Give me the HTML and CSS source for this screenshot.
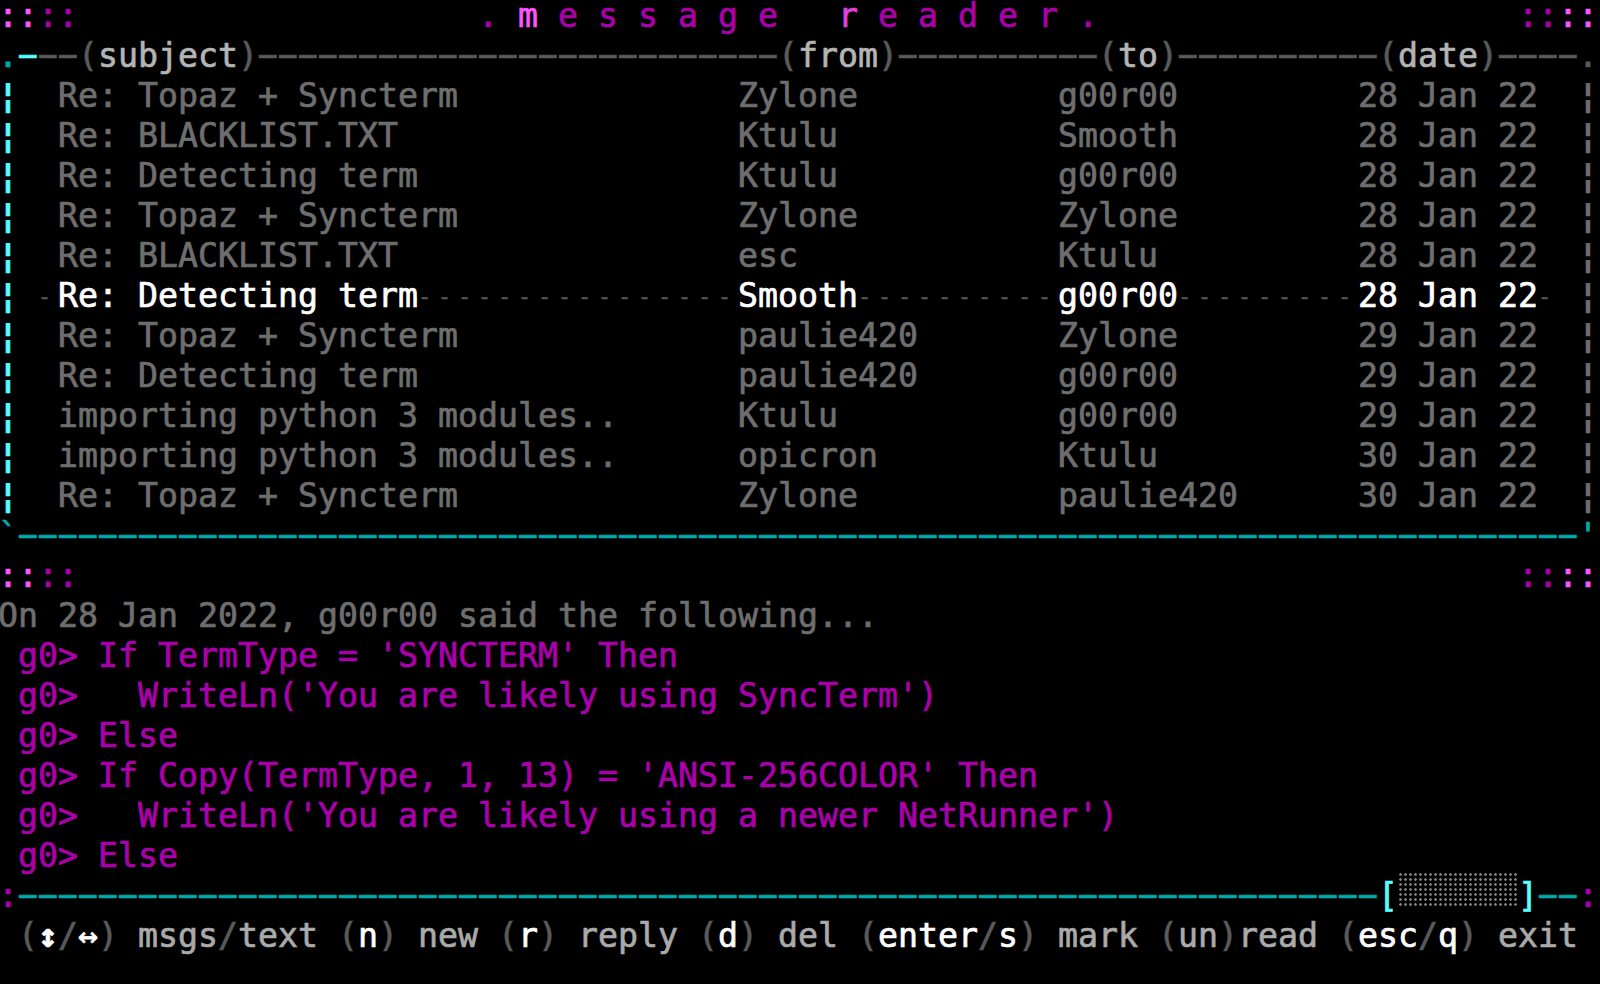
FILE: index.html
```html
<!DOCTYPE html>
<html lang="en">
<head>
  <meta charset="UTF-8">
  <title>message reader</title>
  <link rel="stylesheet" href="styles.css">
</head>
<body>
  <div class="screen">
    <!-- title -->
    <div class="row"><span class="pk">::</span><span class="mg">::</span>                    <span class="mg">.</span> <span class="pk">m</span><span class="mg"> e s s a g e   </span><span class="pk2">r</span><span class="mg"> e a d e r .</span>                     <span class="mg">::</span><span class="pk">::</span></div>

    <!-- list header -->
    <div class="row"><span class="cy">.</span><span class="bc">−</span><span class="dk">−−(</span><span class="lt">subject</span><span class="dk">)−−−−−−−−−−−−−−−−−−−−−−−−−−(</span><span class="lt">from</span><span class="dk">)−−−−−−−−−−(</span><span class="lt">to</span><span class="dk">)−−−−−−−−−−(</span><span class="lt">date</span><span class="dk">)−−−−.</span></div>

    <div class="msg">
      <span class="bar">¦</span><span></span><span>Re: Topaz + Syncterm</span><span>Zylone</span><span>g00r00</span><span>28 Jan 22</span><span></span><span class="rbar">¦</span>
    </div>
    <div class="msg">
      <span class="bar">¦</span><span></span><span>Re: BLACKLIST.TXT</span><span>Ktulu</span><span>Smooth</span><span>28 Jan 22</span><span></span><span class="rbar">¦</span>
    </div>
    <div class="msg">
      <span class="bar">¦</span><span></span><span>Re: Detecting term</span><span>Ktulu</span><span>g00r00</span><span>28 Jan 22</span><span></span><span class="rbar">¦</span>
    </div>
    <div class="msg">
      <span class="bar">¦</span><span></span><span>Re: Topaz + Syncterm</span><span>Zylone</span><span>Zylone</span><span>28 Jan 22</span><span></span><span class="rbar">¦</span>
    </div>
    <div class="msg">
      <span class="bar">¦</span><span></span><span>Re: BLACKLIST.TXT</span><span>esc</span><span>Ktulu</span><span>28 Jan 22</span><span></span><span class="rbar">¦</span>
    </div>
    <div class="msg selected">
      <span class="bar">¦</span><span> <span class="fill">-</span></span><span>Re: Detecting term<span class="fill">----------------</span></span><span>Smooth<span class="fill">----------</span></span><span>g00r00<span class="fill">---------</span></span><span>28 Jan 22</span><span><span class="fill">-</span></span><span class="rbar">¦</span>
    </div>
    <div class="msg">
      <span class="bar">¦</span><span></span><span>Re: Topaz + Syncterm</span><span>paulie420</span><span>Zylone</span><span>29 Jan 22</span><span></span><span class="rbar">¦</span>
    </div>
    <div class="msg">
      <span class="bar">¦</span><span></span><span>Re: Detecting term</span><span>paulie420</span><span>g00r00</span><span>29 Jan 22</span><span></span><span class="rbar">¦</span>
    </div>
    <div class="msg">
      <span class="bar">¦</span><span></span><span>importing python 3 modules..</span><span>Ktulu</span><span>g00r00</span><span>29 Jan 22</span><span></span><span class="rbar">¦</span>
    </div>
    <div class="msg">
      <span class="bar">¦</span><span></span><span>importing python 3 modules..</span><span>opicron</span><span>Ktulu</span><span>30 Jan 22</span><span></span><span class="rbar">¦</span>
    </div>
    <div class="msg">
      <span class="bar">¦</span><span></span><span>Re: Topaz + Syncterm</span><span>Zylone</span><span>paulie420</span><span>30 Jan 22</span><span></span><span class="rbar">¦</span>
    </div>

    <!-- list bottom -->
    <div class="row line cy"><span>`</span><span class="rule">−−−−−−−−−−−−−−−−−−−−−−−−−−−−−−−−−−−−−−−−−−−−−−−−−−−−−−−−−−−−−−−−−−−−−−−−−−−−−−−−−−−−−−−−−−−−−</span><span>'</span></div>

    <div class="row line"><span><span class="pk">::</span><span class="mg">::</span></span><span><span class="mg">::</span><span class="pk">::</span></span></div>

    <!-- message body -->
    <div class="row dim">On 28 Jan 2022, g00r00 said the following...</div>
    <div class="row mg"> g0&gt; If TermType = 'SYNCTERM' Then</div>
    <div class="row mg"> g0&gt;   WriteLn('You are likely using SyncTerm')</div>
    <div class="row mg"> g0&gt; Else</div>
    <div class="row mg"> g0&gt; If Copy(TermType, 1, 13) = 'ANSI-256COLOR' Then</div>
    <div class="row mg"> g0&gt;   WriteLn('You are likely using a newer NetRunner')</div>
    <div class="row mg"> g0&gt; Else</div>

    <!-- status line -->
    <div class="row line"><span class="mg">:</span><span class="rule cy">−−−−−−−−−−−−−−−−−−−−−−−−−−−−−−−−−−−−−−−−−−−−−−−−−−−−−−−−−−−−−−−−−−−−−−−−−−−−−−−−−−−−−−−−−−−−−</span><span class="bc">[</span><span class="shade"></span><span class="bc">]</span><span class="cy">−−</span><span class="mg">:</span></div>

    <div class="row keys"> <span class="dk">(</span><span class="wh arrow">↕</span><span class="dk">/</span><span class="wh">↔</span><span class="dk">)</span> msgs<span class="dk">/</span>text <span class="dk">(</span><span class="wh">n</span><span class="dk">)</span> new <span class="dk">(</span><span class="wh">r</span><span class="dk">)</span> reply <span class="dk">(</span><span class="wh">d</span><span class="dk">)</span> del <span class="dk">(</span><span class="wh">enter</span><span class="dk">/</span><span class="wh">s</span><span class="dk">)</span> mark <span class="dk">(</span>un<span class="dk">)</span>read <span class="dk">(</span><span class="wh">esc</span><span class="dk">/</span><span class="wh">q</span><span class="dk">)</span> exit</div>
  </div>
</body>
</html>
```

FILE: styles.css
```css
html, body {
  margin: 0;
  padding: 0;
  background: #000;
  overflow: hidden;
}

body {
  width: 1600px;
  height: 984px;
}

.screen {
  width: 1600px;
  margin-left: -2px;
  font-family: "DejaVu Sans Mono", monospace;
  font-size: 33.22px;
  line-height: 32px;
  color: #6e6e6e;
  -webkit-text-stroke: 0.7px currentColor;
}

.row {
  height: 40px;
  white-space: pre;
}

/* palette */
.pk { color: #ff55ff; }
.pk2 { color: #e040e0; }
.mg { color: #aa00aa; }
.cy { color: #00aaaa; }
.bc { color: #55ffff; }
.dk { color: #5a5a5a; }
.lt { color: #b4b4b4; }
.wh { color: #ffffff; }
.dim { color: #6e6e6e; }

/* message list */
.msg {
  display: grid;
  grid-template-columns: 20px 40px 680px 320px 300px 180px 40px 20px;
  height: 40px;
  white-space: pre;
}

.msg .bar {
  color: #55ffff;
  font-weight: bold;
}

.msg .rbar {
  color: #6e6e6e;
  font-weight: bold;
}

.msg.selected {
  color: #ffffff;
}

/* small leader dashes, still one per cell */
.msg .fill {
  color: #555555;
  font-size: 22px;
  letter-spacing: 6.76px;
  vertical-align: 3px;
  -webkit-text-stroke: 0.4px currentColor;
}

/* ruled lines */
.line {
  display: flex;
  justify-content: space-between;
}

.rule {
  flex: 1;
  overflow: hidden;
}

.shade {
  width: 120px;
  height: 34px;
  margin-top: -8px;
  background-image: radial-gradient(circle, #7c7c7c 0, #7c7c7c 1px, transparent 1.6px);
  background-size: 5px 5px;
}

/* key help */
.keys {
  color: #aaaaaa;
}

.arrow {
  font-weight: bold;
}
```
